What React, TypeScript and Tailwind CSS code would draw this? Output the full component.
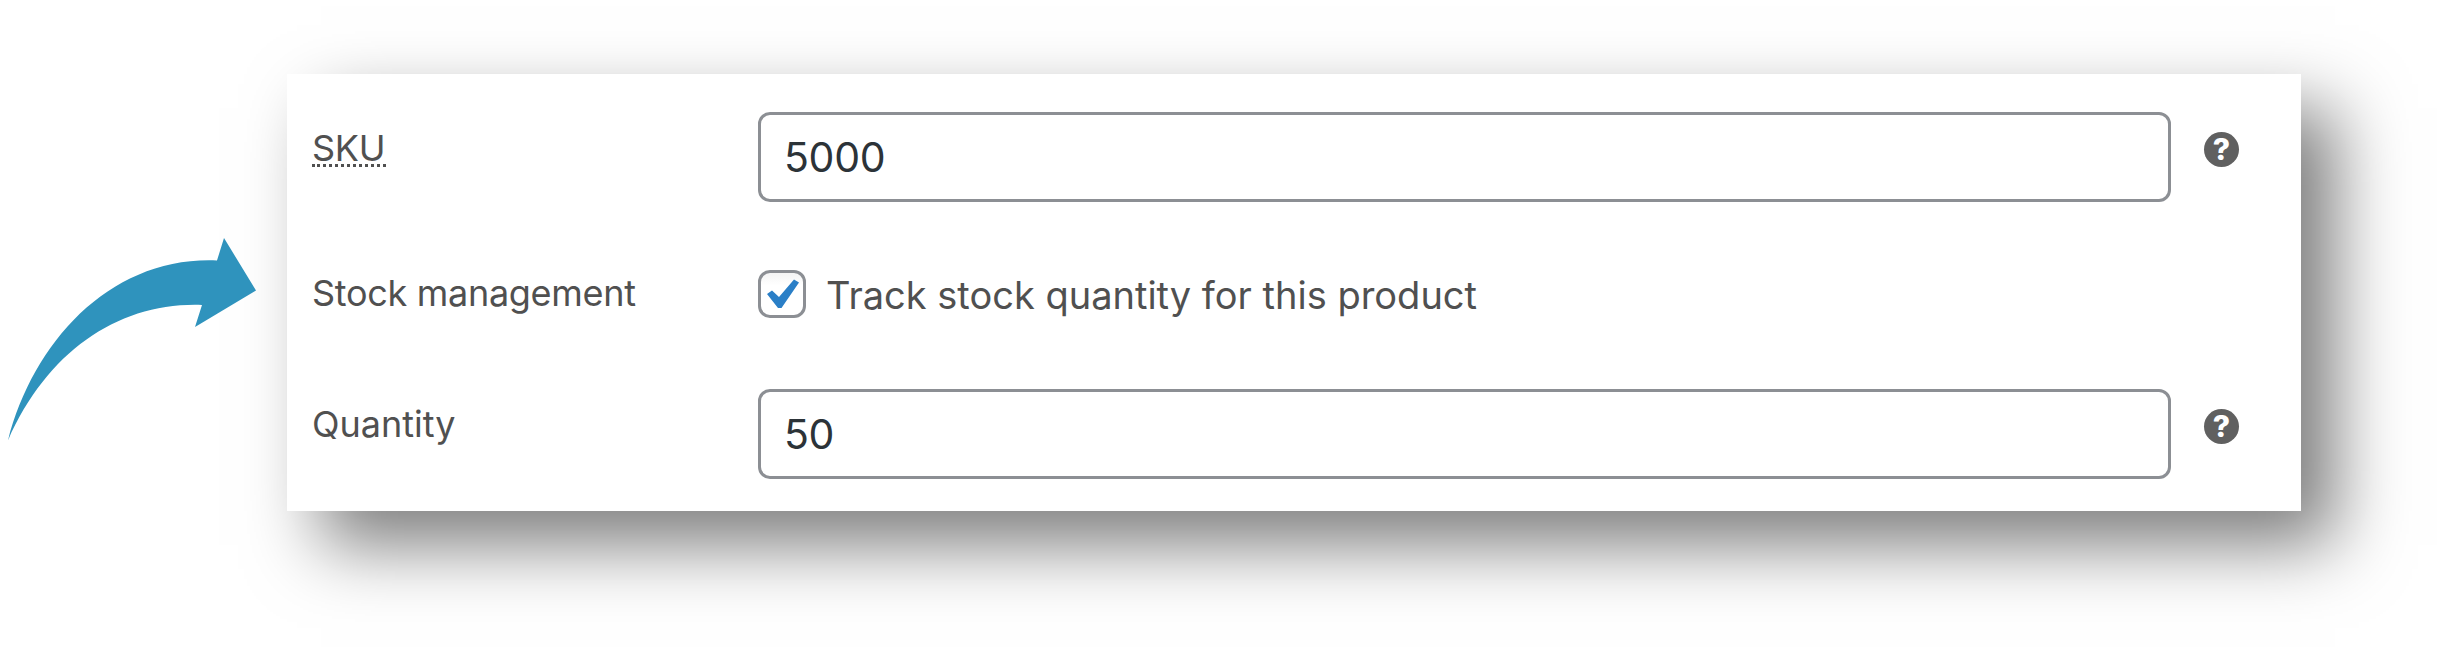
const App = () => {
  return (
    <div className="flex h-[655px] w-[2442px] items-start overflow-hidden bg-white font-[Inter,sans-serif] text-[#505050]">
      <Arrow />
      <div className="mt-[74px] flex h-[437px] w-[2014px] flex-col bg-white pl-[25px] shadow-[34px_34px_68px_rgba(0,0,0,0.515)]">
        <div className="mt-[38px] flex items-start">
          <Label>
            <div className="mt-[24px] w-[74px] border-b-3 border-dotted border-[#505050] pb-1 leading-[24px]">
              SKU
            </div>
          </Label>
          <Field value="5000" />
          <Help />
        </div>
        <div className="mt-[68px] flex h-[50px] items-start">
          <Label>
            <div className="pt-px">Stock management</div>
          </Label>
          <Checkbox />
          <span className="ml-5 text-[38px] leading-[51px]">
            Track stock quantity for this product
          </span>
        </div>
        <div className="mt-[69px] flex items-start">
          <Label>
            <div className="pt-[13px] tracking-normal">Quantity</div>
          </Label>
          <Field value="50" />
          <Help />
        </div>
      </div>
    </div>
  );
};

const Arrow = () => {
  return (
    <svg className="z-10 h-[450px] w-[287px] shrink-0" viewBox="0 0 287 450" fill="#2f93bd">
      <path d="M8 440.500C34 340 112 256 217 260.500L224 238L256 290.500L195 327L202 305C120 302 48 350 8 440.500Z" />
    </svg>
  );
};

const Label = ({ children }: { children: React.ReactNode }) => {
  return (
    <div className="w-[446px] shrink-0 text-[36px] leading-[45px] tracking-[-0.3px]">
      {children}
    </div>
  );
};

const Field = ({ value }: { value: string }) => {
  return (
    <div className="flex h-[90px] w-[1413px] items-center rounded-xl border-3 border-[#8c8f94] px-[23px] pt-0.5 text-[41px] tracking-[-0.3px] text-[#2c3338]">
      {value}
    </div>
  );
};

const Checkbox = () => {
  return (
    <div className="h-12 w-12 shrink-0 rounded-xl border-3 border-[#8c8f94] bg-linear-to-b from-[#f4f4f4] to-white to-30%">
      <svg viewBox="0 0 42 42" fill="#2a7fc7">
        <path d="M6 21L11 17.500L18 24L33 6.500L38 9.500L20.500 35H17Z" />
      </svg>
    </div>
  );
};

const Help = () => {
  return (
    <div className="mt-5 ml-[33px] flex h-[35px] w-[35px] items-center justify-center rounded-full bg-[#606060] text-[30px] font-extrabold text-white">
      ?
    </div>
  );
};

export default App;
